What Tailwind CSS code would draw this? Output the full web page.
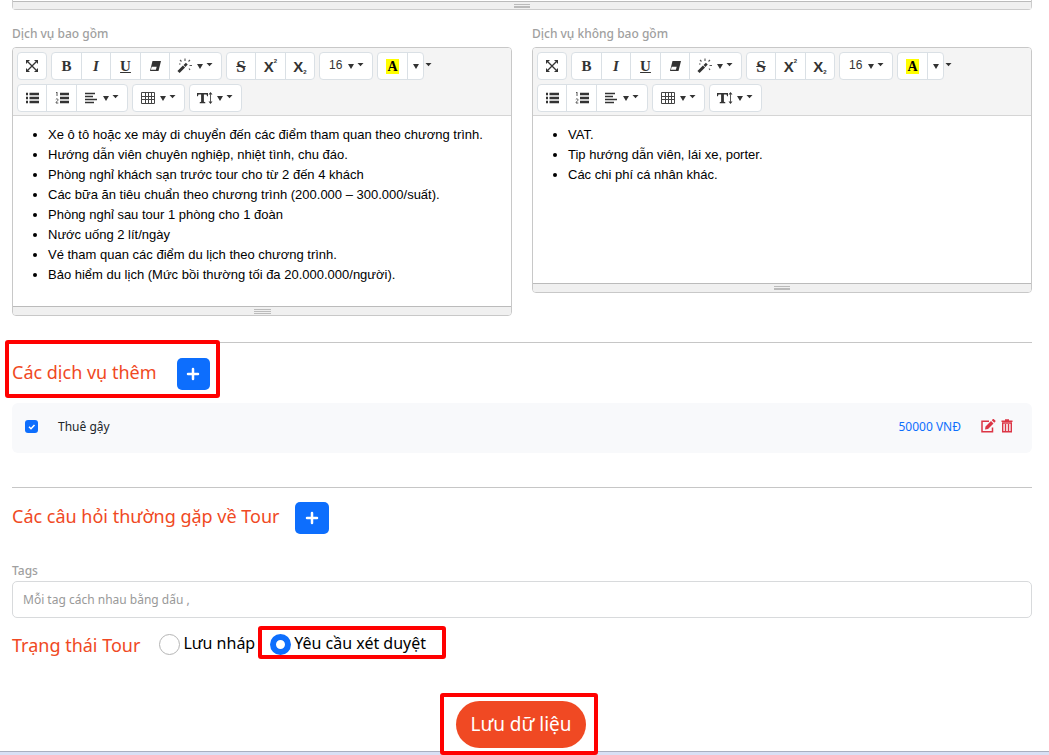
<!DOCTYPE html>
<html lang="vi">
<head>
<meta charset="utf-8">
<meta name="viewport" content="width=device-width, initial-scale=1">
<title>Tour</title>
<script src="https://cdn.jsdelivr.net/npm/@tailwindcss/browser@4"></script>
</head>
<body class="bg-white font-['Noto_Sans',sans-serif] text-black">

<svg class="hidden" aria-hidden="true">
  <symbol id="i-full" viewBox="0 0 14 14"><path d="M3 3l8 8M11 3l-8 8" stroke="#333" stroke-width="1.3"/><path d="M1 1h4L1 5zM13 1v4L9 1zM1 13V9l4 4zM13 13H9l4-4z" fill="#333"/></symbol>
  <symbol id="i-eraser" viewBox="0 0 14 14"><path d="M4.500 2h8.500l-2.500 10h-8.500z" fill="#333"/><path d="M3.700 7.800h5l-.8 3h-5z" fill="#fff"/></symbol>
  <symbol id="i-magic" viewBox="0 0 16 16"><path d="M1.500 14L7 8.500" stroke="#333" stroke-width="3"/><path d="M7.500 8l2.300-2.300" stroke="#333" stroke-width="2.600"/><path d="M8 .5v2.500M3 2l1.500 1.500M2 6h1.500M13 2l-1.500 1.500M12.500 7.500H15M12 10.500l1 1.500" stroke="#555" stroke-width="1.100"/></symbol>
  <symbol id="i-ul" viewBox="0 0 14 14"><path d="M1 3h2M1 7h2M1 11h2M4.500 3H14M4.500 7H14M4.500 11H14" stroke="#333" stroke-width="2.300"/></symbol>
  <symbol id="i-ol" viewBox="0 0 14 14"><path d="M5 3h9M5 7h9M5 11h9" stroke="#333" stroke-width="2.300"/><path d="M1 2l1-1v4M.8 8.500c.5-1 2.200-.8 2.200.3C3 10 1 10.500 1 12h2.300" stroke="#555" fill="none"/></symbol>
  <symbol id="i-align" viewBox="0 0 14 14"><path d="M1 2.500h10M1 5.500h8M1 8.500h12M1 11.500h9" stroke="#333" stroke-width="1.400"/></symbol>
  <symbol id="i-table" viewBox="0 0 16 14"><path d="M1.500 1.500h13v11h-13zM1.500 5.500h13M1.500 8.500h13M5.500 1.500v11M8.500 1.500v11M11.500 1.500v11" stroke="#444" fill="none"/></symbol>
  <symbol id="i-height" viewBox="0 0 16 14"><path d="M0 2h11v3.200h-.9L9.500 3.500H6.900v7.300l1.400.5v.9H2.700v-.9l1.400-.5V3.500H1.500L.9 5.200H0zM13.500 1l2 2.600h-4zM13.500 13l2-2.600h-4z" fill="#333"/><path d="M13.500 3v8" stroke="#555"/></symbol>
  <symbol id="i-tri" viewBox="0 0 6 5"><path d="M0 0h6L3 5z" fill="#333"/></symbol>
  <symbol id="i-caret" viewBox="0 0 7 4"><path d="M.5 0h6L3.500 3.300z" fill="#333"/></symbol>
  <symbol id="i-plus" viewBox="0 0 14 14"><path d="M7 2v10M2 7h10" stroke="#fff" stroke-width="2.500" stroke-linecap="round"/></symbol>
</svg>

<template id="toolbar">
  <div class="flex flex-wrap gap-1 border-b border-[#d5d5d5] bg-[#f4f4f4] px-1 pt-1 pb-[3px] text-[#333]">
    <div class="flex h-7 rounded-sm border border-[#dae0e5] bg-white">
      <button type="button" aria-label="Toàn màn hình" class="flex w-7 items-center justify-center"><svg class="size-3.5"><use href="#i-full"/></svg></button>
    </div>
    <div class="flex h-7 divide-x divide-[#dae0e5] rounded-sm border border-[#dae0e5] bg-white font-['Liberation_Serif',serif] text-[15px] leading-none">
      <button type="button" class="w-[30px] font-bold">B</button>
      <button type="button" class="w-[29px] font-bold italic">I</button>
      <button type="button" class="w-[30px] font-bold underline">U</button>
      <button type="button" aria-label="Xóa định dạng" class="flex w-[29px] items-center justify-center"><svg class="size-3.5"><use href="#i-eraser"/></svg></button>
      <button type="button" aria-label="Kiểu" class="flex w-[51px] items-center pl-[7px]"><svg class="size-4"><use href="#i-magic"/></svg><svg class="ml-1 h-[5px] w-1.5"><use href="#i-tri"/></svg><svg class="mb-0.5 ml-[3px] h-1 w-[7px]"><use href="#i-caret"/></svg></button>
    </div>
    <div class="flex h-7 divide-x divide-[#dae0e5] rounded-sm border border-[#dae0e5] bg-white font-bold leading-none">
      <button type="button" class="w-[29px] font-['Liberation_Serif',serif] text-[17px] line-through">S</button>
      <button type="button" class="flex w-[30px] items-center justify-center font-['Liberation_Sans',sans-serif] text-[15px]">X<sup class="mb-1 text-[6px]">2</sup></button>
      <button type="button" class="flex w-7 items-center justify-center font-['Liberation_Sans',sans-serif] text-[15px]">X<sub class="mt-2 text-[6px]">2</sub></button>
    </div>
    <div class="flex h-7 rounded-sm border border-[#dae0e5] bg-white">
      <button type="button" class="flex w-[52px] items-center pb-0.5 pl-[9px] font-['Liberation_Sans',sans-serif] text-[12px]">16<svg class="mt-0.5 ml-1.5 h-[5px] w-1.5"><use href="#i-tri"/></svg><svg class="ml-[3px] h-1 w-[7px]"><use href="#i-caret"/></svg></button>
    </div>
    <div class="flex items-center">
      <div class="flex h-7 divide-x divide-[#dae0e5] rounded-sm border border-[#dae0e5] bg-white">
        <button type="button" class="flex w-[30px] items-center justify-center"><span class="bg-[#ff0] px-px font-['Liberation_Serif',serif] text-[14px] leading-[15px] font-bold text-black">A</span></button>
        <button type="button" aria-label="Màu chữ" class="flex w-[15px] items-center justify-center"><svg class="h-[5px] w-1.5"><use href="#i-tri"/></svg></button>
      </div>
      <svg class="mb-0.5 ml-px h-1 w-[7px]"><use href="#i-caret"/></svg>
    </div>
    <div class="flex basis-full gap-1">
      <div class="flex h-7 divide-x divide-[#dae0e5] rounded-sm border border-[#dae0e5] bg-white">
        <button type="button" aria-label="Danh sách" class="flex w-[29px] items-center justify-center"><svg class="size-3.5"><use href="#i-ul"/></svg></button>
        <button type="button" aria-label="Danh sách số" class="flex w-[30px] items-center justify-center"><svg class="size-3.5"><use href="#i-ol"/></svg></button>
        <button type="button" aria-label="Căn lề" class="flex w-[50px] items-center pl-[7px]"><svg class="size-3.5"><use href="#i-align"/></svg><svg class="ml-[5px] h-[5px] w-1.5"><use href="#i-tri"/></svg><svg class="mb-0.5 ml-[3px] h-1 w-[7px]"><use href="#i-caret"/></svg></button>
      </div>
      <div class="flex h-7 rounded-sm border border-[#dae0e5] bg-white">
        <button type="button" aria-label="Bảng" class="flex w-[51px] items-center pl-[7px]"><svg class="h-3.5 w-4"><use href="#i-table"/></svg><svg class="ml-1 h-[5px] w-1.5"><use href="#i-tri"/></svg><svg class="mb-0.5 ml-[3px] h-1 w-[7px]"><use href="#i-caret"/></svg></button>
      </div>
      <div class="flex h-7 rounded-sm border border-[#dae0e5] bg-white">
        <button type="button" aria-label="Chiều cao dòng" class="flex w-[51px] items-center pl-[7px]"><svg class="h-3.5 w-4"><use href="#i-height"/></svg><svg class="ml-1 h-[5px] w-1.5"><use href="#i-tri"/></svg><svg class="mb-0.5 ml-[3px] h-1 w-[7px]"><use href="#i-caret"/></svg></button>
      </div>
    </div>
  </div>
</template>

<main class="pr-[17px] pl-3">
  <div class="flex h-2.5 justify-center rounded-b-sm border border-t-0 border-[#ccc] pt-px">
    <div class="flex w-full flex-col items-center gap-px border-t border-[#bbb] bg-[#f0f0f0] pt-[2px]"><i class="h-px w-4 bg-[#bbb]"></i><i class="h-0.5 w-4 bg-[#bbb]"></i></div>
  </div>

  <div class="mt-3.5 grid grid-cols-2 items-start gap-5">
    <section>
      <h2 class="mb-[3px] text-[12px] leading-5 font-medium text-[#a0a0a0]">Dịch vụ bao gồm</h2>
      <div class="editor overflow-hidden rounded-sm border border-[#c8c8c8]">
        <ul class="list-disc pt-[9px] pb-[21px] pl-[35px] font-['Liberation_Sans',sans-serif] text-[13px] leading-5">
          <li>Xe ô tô hoặc xe máy di chuyển đến các điểm tham quan theo chương trình.</li>
          <li>Hướng dẫn viên chuyên nghiệp, nhiệt tình, chu đáo.</li>
          <li>Phòng nghỉ khách sạn trước tour cho từ 2 đến 4 khách</li>
          <li>Các bữa ăn tiêu chuẩn theo chương trình (200.000 – 300.000/suất).</li>
          <li>Phòng nghỉ sau tour 1 phòng cho 1 đoàn</li>
          <li>Nước uống 2 lít/ngày</li>
          <li>Vé tham quan các điểm du lịch theo chương trình.</li>
          <li>Bảo hiểm du lịch (Mức bồi thường tối đa 20.000.000/người).</li>
        </ul>
        <div class="flex h-[9px] flex-col items-center gap-px border-t border-[#bbb] bg-[#f0f0f0] pt-[2px]"><i class="h-px w-[17px] bg-[#bbb]"></i><i class="h-px w-[17px] bg-[#bbb]"></i><i class="h-px w-[17px] bg-[#bbb]"></i></div>
      </div>
    </section>
    <section>
      <h2 class="mb-[3px] text-[12px] leading-5 font-medium text-[#a0a0a0]">Dịch vụ không bao gồm</h2>
      <div class="editor overflow-hidden rounded-sm border border-[#c8c8c8]">
        <ul class="list-disc pt-[9px] pb-[98px] pl-[35px] font-['Liberation_Sans',sans-serif] text-[13px] leading-5">
          <li>VAT.</li>
          <li>Tip hướng dẫn viên, lái xe, porter.</li>
          <li>Các chi phí cá nhân khác.</li>
        </ul>
        <div class="flex h-[9px] flex-col items-center gap-px border-t border-[#bbb] bg-[#f0f0f0] pt-[2px]"><i class="h-px w-4 bg-[#bbb]"></i><i class="h-0.5 w-4 bg-[#bbb]"></i></div>
      </div>
    </section>
  </div>

  <section class="relative mt-[26px] border-t border-[#c6c6c6] pt-[15px]">
    <div class="flex items-center gap-5">
      <h2 class="pb-1 text-[18px] leading-7 text-[#f04923]">Các dịch vụ thêm</h2>
      <button type="button" aria-label="Thêm dịch vụ" class="flex h-8 w-[33px] items-center justify-center rounded-[5px] bg-[#0d6efd]"><svg class="size-3.5"><use href="#i-plus"/></svg></button>
    </div>
    <div class="pointer-events-none absolute -top-[3px] -left-[7px] h-[58px] w-[215px] rounded-[3px] border-4 border-[#f00]"></div>
    <div class="mt-[13px] flex h-[50px] items-center rounded-md bg-[#f8f9fb] pr-[19px] pl-[13px] text-[12px]">
      <label class="flex items-center gap-5 pb-[3px] text-[#212529]">
        <span class="grid place-items-center">
          <input type="checkbox" checked class="col-start-1 row-start-1 size-[13px] appearance-none rounded-[3px] bg-[#0d6efd]">
          <svg class="col-start-1 row-start-1 size-[13px]" viewBox="0 0 13 13"><path d="M4 6.700l2 2 3.500-3.700" fill="none" stroke="#fff" stroke-width="1.500"/></svg>
        </span>
        Thuê gậy
      </label>
      <span class="ml-auto pb-[3px] text-[#0d6efd]">50000 VNĐ</span>
      <button type="button" aria-label="Sửa" class="mb-1 ml-5"><svg class="h-3.5 w-[15px]" viewBox="0 0 15 14"><path d="M8 2.200H1v10.600h10.500V8.500" fill="none" stroke="#dc3545" stroke-width="1.500"/><path d="M4.500 7.500l5.500-5.500 2.500 2.500L7 10l-3 .5zM10.800 1.200l1.100-1.100c.3-.3.700-.1 1 .1l1.400 1.400c.3.300.4.700.1 1l-1.100 1.100z" fill="#dc3545"/></svg></button>
      <button type="button" aria-label="Xóa" class="mb-1 ml-[5px]"><svg class="h-3.5 w-3" viewBox="0 0 12 14"><path d="M.5 2.200h11M4 1h4" fill="none" stroke="#dc3545" stroke-width="1.500"/><path d="M1.700 4h8.600v8.800H1.700zM4.500 5v7M7.500 5v7" fill="none" stroke="#dc3545" stroke-width="1.400"/></svg></button>
    </div>
  </section>

  <section class="mt-[34px] border-t border-[#c6c6c6] pt-3.5">
    <div class="flex items-center gap-4">
      <h2 class="pb-1 text-[18px] leading-7 text-[#f04923]">Các câu hỏi thường gặp về Tour</h2>
      <button type="button" aria-label="Thêm câu hỏi" class="flex h-8 w-[34px] items-center justify-center rounded-[5px] bg-[#0d6efd]"><svg class="size-3.5"><use href="#i-plus"/></svg></button>
    </div>
  </section>

  <div class="mt-[27px]">
    <label for="tags" class="block text-[12px] leading-5 font-medium text-[#a0a0a0]">Tags</label>
    <input id="tags" type="text" placeholder="Mỗi tag cách nhau bằng dấu ," class="h-[37px] w-full rounded-[5px] border border-[#d8dadc] px-2.5 text-[12px] placeholder:text-[#999]">
  </div>

  <div role="radiogroup" aria-labelledby="status-title" class="mt-2 flex h-[33px] items-center text-[16px]">
    <h2 id="status-title" class="pt-[5px] text-[18px] leading-7 text-[#f04923]">Trạng thái Tour</h2>
    <label class="ml-[19px] flex items-center gap-[3px]"><input type="radio" name="status" class="mt-1 size-[21px] appearance-none rounded-full border border-[#b5b5b5] bg-white">Lưu nháp</label>
    <label class="relative ml-[15px] flex items-center gap-[3px]"><input type="radio" name="status" checked class="mt-1 size-[21px] appearance-none rounded-full border-[6px] border-[#0d6efd] bg-white">Yêu cầu xét duyệt<span class="pointer-events-none absolute -inset-y-1 -right-5 -left-3 rounded-[3px] border-4 border-[#f00]"></span></label>
  </div>

  <div class="mt-[34px] mr-1.5 flex justify-center">
    <div class="rounded-[3px] border-4 border-[#f00] pt-1 pr-2 pb-[3px] pl-3">
      <button type="submit" class="h-[47px] rounded-full bg-[#f04923] px-3.5 text-[19px] text-white">Lưu dữ liệu</button>
    </div>
  </div>
</main>
<footer class="-mt-1 h-1 border-t border-[#a9afc0] bg-[#d9e0f5]"></footer>

<script>
  const toolbar = document.getElementById('toolbar');
  document.querySelectorAll('.editor').forEach(e => e.prepend(toolbar.content.cloneNode(true)));
</script>
</body>
</html>
